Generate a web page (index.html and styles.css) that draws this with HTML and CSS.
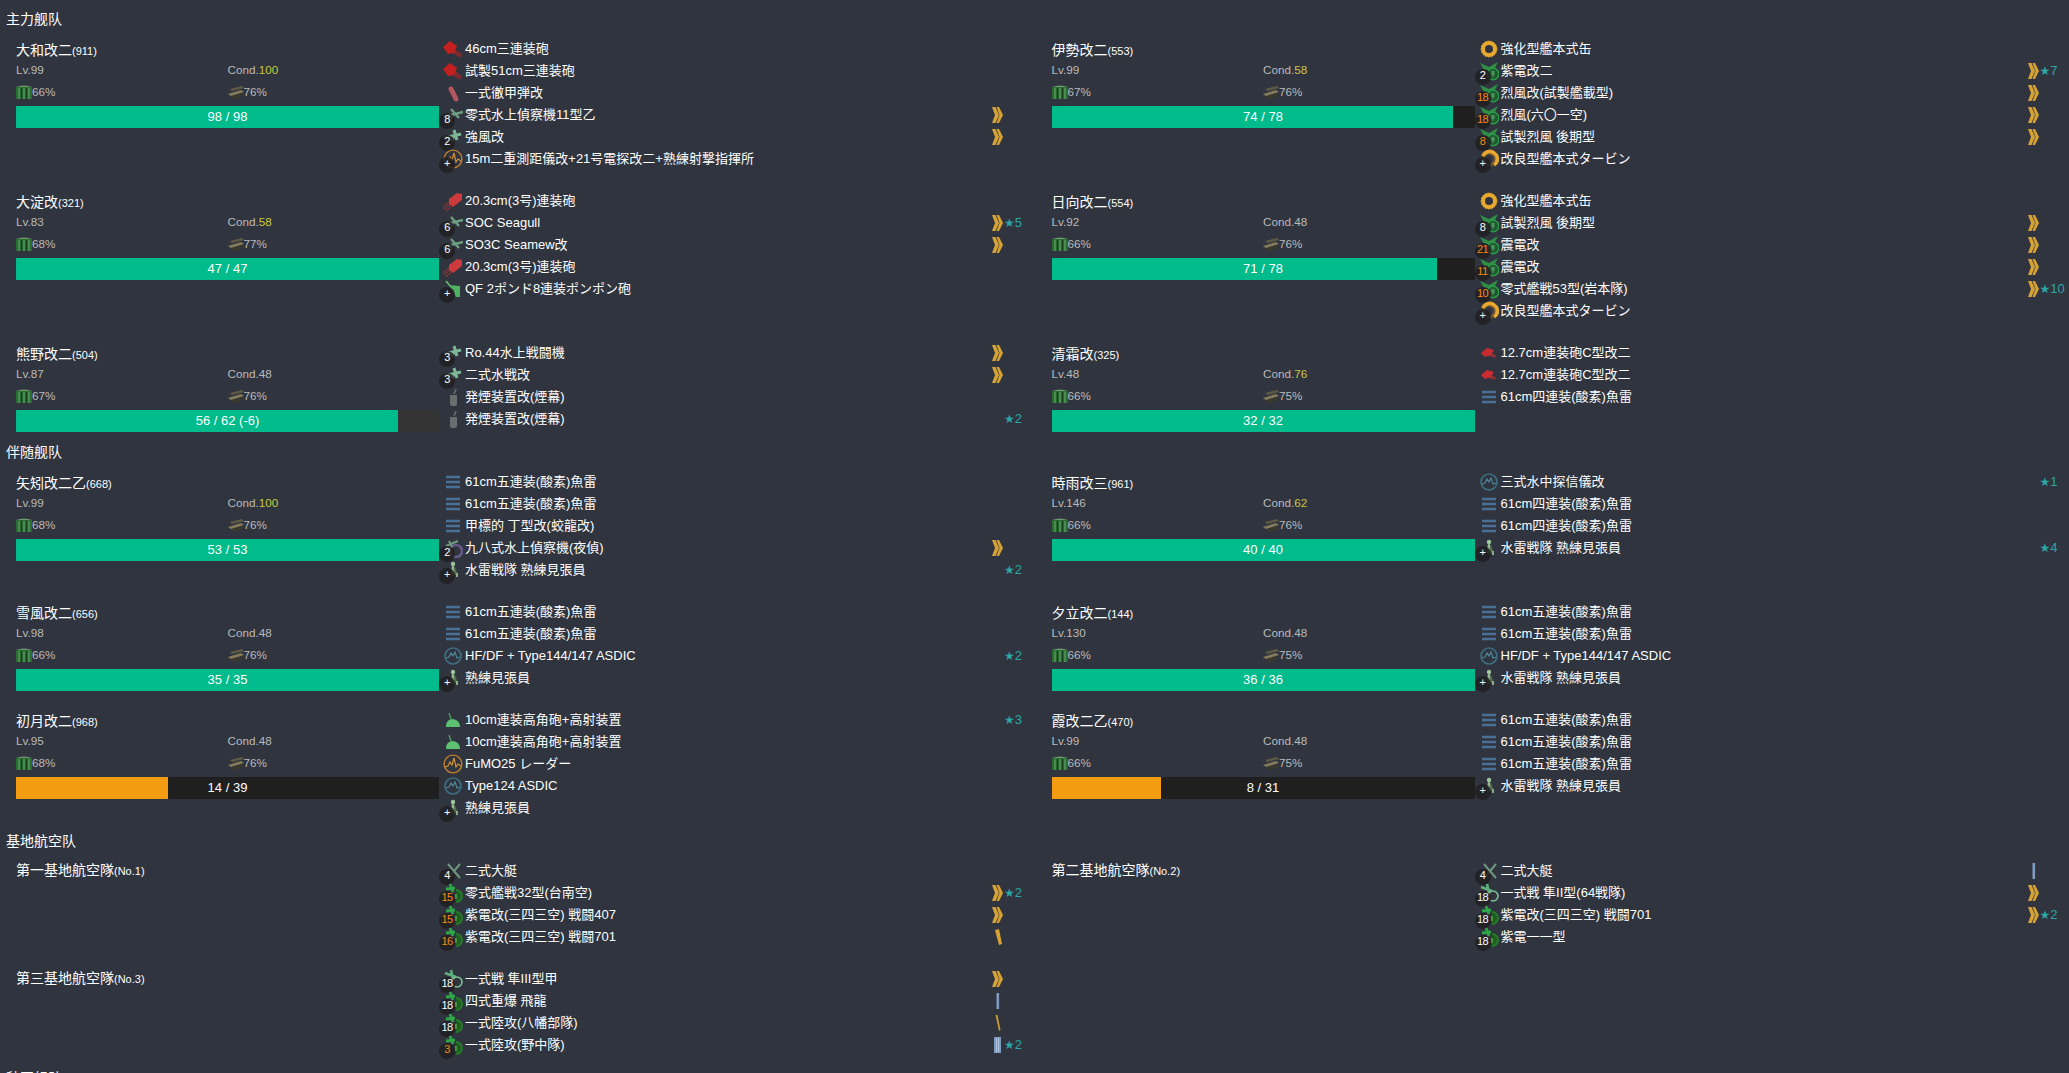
FILE: index.html
```html
<!DOCTYPE html>
<html lang="zh">
<head>
    <meta charset="UTF-8">
    <title>Fleet</title>
    <link rel="stylesheet" href="styles.css">
</head>
<body>
    <!-- shared icons -->
    <svg class="defs" width="0" height="0">
        <symbol id="i-biggun" viewBox="0 0 20 20"><path d="M8 7l11 8-2 4-11-7z" fill="#7b2a30"/><path d="M0 8l7-6 7 5-3 7-6 1z" fill="#c42020"/></symbol>
        <symbol id="i-midgun" viewBox="0 0 20 20"><path d="M7 13l-6 5M8 15l-5 5M6 11l-6 5" stroke="#a33" stroke-width="1"/><path d="M6 8l8-6 5 1 0 6-9 7-4-3z" fill="#cc3a3e"/></symbol>
        <symbol id="i-smallgun" viewBox="0 0 20 20"><path d="M9 9l8 3-1 3-9-3z" fill="#8a3036"/><path d="M2 10l6-5 7 2-3 5-6 2z" fill="#c92c30"/></symbol>
        <symbol id="i-ap" viewBox="0 0 20 20"><path d="M8 6l5 10" stroke="#b4555f" stroke-width="5" stroke-linecap="round"/></symbol>
        <symbol id="i-seaplane" viewBox="0 0 20 20"><path d="M0 12L20 7M8 4l8 9M7 16l3-7" stroke="#6f9f83" stroke-width="2.4" fill="none"/></symbol>
        <symbol id="i-seafighter" viewBox="0 0 20 20"><path d="M1 11l17-4M11 3l3 10M9 14l2-6" stroke="#7db596" stroke-width="3" fill="none"/></symbol>
        <symbol id="i-night" viewBox="0 0 20 20"><circle cx="13" cy="13" r="6" fill="none" stroke="#65588a" stroke-width="2.5"/><path d="M3 8l12-5M6 3l3 6M7 9v8" stroke="#6f9a80" stroke-width="2" fill="none"/></symbol>
        <symbol id="i-boat" viewBox="0 0 20 20"><path d="M5 3l12 14M17 3L6 16" stroke="#6f9680" stroke-width="2" fill="none"/></symbol>
        <symbol id="i-radar" viewBox="0 0 20 20"><circle cx="10" cy="10" r="8.9" fill="none" stroke="#c07f2c" stroke-width="1.4"/><path d="M2 13l3-1 2-4 2 3 2-7 2 9 2-3 3 2" fill="none" stroke="#d58f30" stroke-width="1.2"/></symbol>
        <symbol id="i-sonar" viewBox="0 0 20 20"><circle cx="10" cy="10" r="8" fill="none" stroke="#3c6e80" stroke-width="1.7"/><path d="M3 12l3-1 2-4 2 3 2-4 2 6 3-1" fill="none" stroke="#4d8799" stroke-width="1.2"/></symbol>
        <symbol id="i-torpedo" viewBox="0 0 20 20"><path d="M3 5h14M3 10h14M3 15h14" stroke="#4a7096" stroke-width="2.6"/></symbol>
        <symbol id="i-aa" viewBox="0 0 20 20"><path d="M8 9L6 3" stroke="#4f9a60" stroke-width="1.4"/><path d="M3 17q0-8 7-8q7 1 7 8z" fill="#5cc070"/></symbol>
        <symbol id="i-pompom" viewBox="0 0 20 20"><path d="M3 2l5 6" stroke="#6fc47d" stroke-width="1.4"/><path d="M6 6l11 1v11h-4z" fill="#4fb162"/></symbol>
        <symbol id="i-lookout" viewBox="0 0 20 20"><circle cx="10" cy="4" r="2.2" fill="#9dc79a"/><path d="M8 7h4l2 6-3 3H8z" fill="#55714f"/><path d="M10 6v6M14 13v4" stroke="#a4c7a0" stroke-width="1.6"/></symbol>
        <symbol id="i-smoke" viewBox="0 0 20 20"><path d="M11 7l2-5" stroke="#626a6c" stroke-width="1.8"/><path d="M7 8h7v9q0 2-2 2H9q-2 0-2-2z" fill="#666e70"/></symbol>
        <symbol id="i-boiler" viewBox="0 0 20 20"><circle cx="10" cy="10" r="6" fill="none" stroke="#e9a82e" stroke-width="4"/><circle cx="10" cy="10" r="8" fill="none" stroke="#e9a82e" stroke-width="1" stroke-dasharray="1.500 1.500"/></symbol>
        <symbol id="i-turbine" viewBox="0 0 20 20"><circle cx="10" cy="10" r="6" fill="none" stroke="#6b5532" stroke-width="3.6"/><path d="M4 7a7 7 0 0 1 11-3a7 7 0 0 1 0 12" fill="none" stroke="#e9a82e" stroke-width="3.6"/></symbol>
        <symbol id="i-fighter" viewBox="0 0 20 20"><path d="M1 2l9 4 9-5-4 8H5z" fill="#2f8f46"/><circle cx="14" cy="13" r="5.8" fill="#1d5a2e" stroke="#2c9a48" stroke-width="1.4"/><path d="M12 11h4M12 13h4M14 10v6" stroke="#6bb07c" stroke-width=".8"/></symbol>
        <symbol id="i-land" viewBox="0 0 20 20"><path d="M3 6l9-1M7 1l3 8" stroke="#2fa648" stroke-width="2.8"/><path d="M13 7a6 6 0 0 1 0 12" fill="#1f5c20" stroke="#277a2c" stroke-width="2"/><path d="M12 11h2v5h-2z" fill="#46953f"/></symbol>
        <symbol id="i-hayabusa" viewBox="0 0 20 20"><path d="M2 4l11 4M8 1l2 9" stroke="#5fae7c" stroke-width="2.6"/><circle cx="14" cy="13" r="5" fill="none" stroke="#7cc294" stroke-width="1.6"/></symbol>
        <symbol id="p-chev" viewBox="0 0 11 16"><path d="M0 0h3.500l3.500 8-3.500 8H0l3-8zM4.500 0H7l4 8-4 8H4.500l3-8z" fill="#d6a233"/></symbol>
        <symbol id="p-slash" viewBox="0 0 11 16"><path d="M3 1l4-1 3 15-3 1z" fill="#d6a233"/></symbol>
        <symbol id="p-thin" viewBox="0 0 11 16"><path d="M3.500 0l2 0 3 15-1.500 1z" fill="#c99b35"/></symbol>
        <symbol id="p-bar" viewBox="0 0 11 16"><rect x="4.500" y="0" width="2.600" height="16" fill="#7f9cc0"/></symbol>
        <symbol id="p-bars" viewBox="0 0 11 16"><rect x="2" y="0" width="7" height="16" fill="#7f9cc0"/><path d="M4.500 1v14M6.500 1v14" stroke="#b8c9df" stroke-width=".8"/></symbol>
        <symbol id="r-fuel" viewBox="0 0 16 14"><rect x="0" y="2" width="16" height="12" fill="#2a6b32"/><path d="M0 2q8-3 16 0" fill="#6f9a70"/><path d="M3 3v11M8 3v11M13 3v11" stroke="#62a06a" stroke-width="1.200"/><path d="M5.500 3v11M10.500 3v11" stroke="#183f1d" stroke-width="1.200"/></symbol>
        <symbol id="r-ammo" viewBox="0 0 16 14"><path d="M2 4l12-3 2 2-12 3z" fill="#5f5a44"/><path d="M0 9l13-4 3 2-13 4z" fill="#857a58"/><path d="M3 12l11-3 2 1-10 4z" fill="#3f3928"/></symbol>
    </svg>

    <section class="fleet">
        <h2 class="fleet-title">主力舰队</h2>
        <div class="fleet-row">
            <div class="ship">
                <div class="ship-info">
                    <div class="ship-name">大和改二<small>(911)</small></div>
                    <div class="stats">
                        <span>Lv.99</span><span>Cond.<b class="cond-up">100</b></span>
                        <span><svg class="res"><use href="#r-fuel"/></svg>66%</span><span><svg class="res"><use href="#r-ammo"/></svg>76%</span>
                    </div>
                    <div class="bar"><div class="bar-fill" style="width:100%"></div><div class="bar-label">98 / 98</div></div>
                </div>
                <div class="slots">
                    <div class="slot"><span class="slot-icon"><svg><use href="#i-biggun"/></svg></span><span>46cm三連装砲</span></div>
                    <div class="slot"><span class="slot-icon"><svg><use href="#i-biggun"/></svg></span><span>試製51cm三連装砲</span></div>
                    <div class="slot"><span class="slot-icon"><svg><use href="#i-ap"/></svg></span><span>一式徹甲弾改</span></div>
                    <div class="slot"><span class="slot-icon"><svg><use href="#i-seaplane"/></svg><b class="lv">8</b></span><span>零式水上偵察機11型乙</span><svg class="prof"><use href="#p-chev"/></svg></div>
                    <div class="slot"><span class="slot-icon"><svg><use href="#i-seafighter"/></svg><b class="lv">2</b></span><span>強風改</span><svg class="prof"><use href="#p-chev"/></svg></div>
                    <div class="slot"><span class="slot-icon"><svg><use href="#i-radar"/></svg><b class="lv">+</b></span><span>15m二重測距儀改+21号電探改二+熟練射撃指揮所</span></div>
                </div>
            </div>
            <div class="ship">
                <div class="ship-info">
                    <div class="ship-name">伊勢改二<small>(553)</small></div>
                    <div class="stats">
                        <span>Lv.99</span><span>Cond.<b class="cond-up">58</b></span>
                        <span><svg class="res"><use href="#r-fuel"/></svg>67%</span><span><svg class="res"><use href="#r-ammo"/></svg>76%</span>
                    </div>
                    <div class="bar"><div class="bar-fill" style="width:94.87%"></div><div class="bar-label">74 / 78</div></div>
                </div>
                <div class="slots">
                    <div class="slot"><span class="slot-icon"><svg><use href="#i-boiler"/></svg></span><span>強化型艦本式缶</span></div>
                    <div class="slot"><span class="slot-icon"><svg><use href="#i-fighter"/></svg><b class="lv">2</b></span><span>紫電改二</span><svg class="prof"><use href="#p-chev"/></svg><span class="star"><i>★</i>7</span></div>
                    <div class="slot"><span class="slot-icon"><svg><use href="#i-fighter"/></svg><b class="lv hot">18</b></span><span>烈風改(試製艦載型)</span><svg class="prof"><use href="#p-chev"/></svg></div>
                    <div class="slot"><span class="slot-icon"><svg><use href="#i-fighter"/></svg><b class="lv hot">18</b></span><span>烈風(六〇一空)</span><svg class="prof"><use href="#p-chev"/></svg></div>
                    <div class="slot"><span class="slot-icon"><svg><use href="#i-fighter"/></svg><b class="lv hot">8</b></span><span>試製烈風 後期型</span><svg class="prof"><use href="#p-chev"/></svg></div>
                    <div class="slot"><span class="slot-icon"><svg><use href="#i-turbine"/></svg><b class="lv">+</b></span><span>改良型艦本式タービン</span></div>
                </div>
            </div>
        </div>
        <div class="fleet-row">
            <div class="ship">
                <div class="ship-info">
                    <div class="ship-name">大淀改<small>(321)</small></div>
                    <div class="stats">
                        <span>Lv.83</span><span>Cond.<b class="cond-up">58</b></span>
                        <span><svg class="res"><use href="#r-fuel"/></svg>68%</span><span><svg class="res"><use href="#r-ammo"/></svg>77%</span>
                    </div>
                    <div class="bar"><div class="bar-fill" style="width:100%"></div><div class="bar-label">47 / 47</div></div>
                </div>
                <div class="slots">
                    <div class="slot"><span class="slot-icon"><svg><use href="#i-midgun"/></svg></span><span>20.3cm(3号)連装砲</span></div>
                    <div class="slot"><span class="slot-icon"><svg><use href="#i-seaplane"/></svg><b class="lv">6</b></span><span>SOC Seagull</span><svg class="prof"><use href="#p-chev"/></svg><span class="star"><i>★</i>5</span></div>
                    <div class="slot"><span class="slot-icon"><svg><use href="#i-seaplane"/></svg><b class="lv">6</b></span><span>SO3C Seamew改</span><svg class="prof"><use href="#p-chev"/></svg></div>
                    <div class="slot"><span class="slot-icon"><svg><use href="#i-midgun"/></svg></span><span>20.3cm(3号)連装砲</span></div>
                    <div class="slot"><span class="slot-icon"><svg><use href="#i-pompom"/></svg><b class="lv">+</b></span><span>QF 2ポンド8連装ポンポン砲</span></div>
                </div>
            </div>
            <div class="ship">
                <div class="ship-info">
                    <div class="ship-name">日向改二<small>(554)</small></div>
                    <div class="stats">
                        <span>Lv.92</span><span>Cond.48</span>
                        <span><svg class="res"><use href="#r-fuel"/></svg>66%</span><span><svg class="res"><use href="#r-ammo"/></svg>76%</span>
                    </div>
                    <div class="bar"><div class="bar-fill" style="width:91.03%"></div><div class="bar-label">71 / 78</div></div>
                </div>
                <div class="slots">
                    <div class="slot"><span class="slot-icon"><svg><use href="#i-boiler"/></svg></span><span>強化型艦本式缶</span></div>
                    <div class="slot"><span class="slot-icon"><svg><use href="#i-fighter"/></svg><b class="lv">8</b></span><span>試製烈風 後期型</span><svg class="prof"><use href="#p-chev"/></svg></div>
                    <div class="slot"><span class="slot-icon"><svg><use href="#i-fighter"/></svg><b class="lv hot">21</b></span><span>震電改</span><svg class="prof"><use href="#p-chev"/></svg></div>
                    <div class="slot"><span class="slot-icon"><svg><use href="#i-fighter"/></svg><b class="lv hot">11</b></span><span>震電改</span><svg class="prof"><use href="#p-chev"/></svg></div>
                    <div class="slot"><span class="slot-icon"><svg><use href="#i-fighter"/></svg><b class="lv hot">10</b></span><span>零式艦戦53型(岩本隊)</span><svg class="prof"><use href="#p-chev"/></svg><span class="star"><i>★</i>10</span></div>
                    <div class="slot"><span class="slot-icon"><svg><use href="#i-turbine"/></svg><b class="lv">+</b></span><span>改良型艦本式タービン</span></div>
                </div>
            </div>
        </div>
        <div class="fleet-row">
            <div class="ship">
                <div class="ship-info">
                    <div class="ship-name">熊野改二<small>(504)</small></div>
                    <div class="stats">
                        <span>Lv.87</span><span>Cond.48</span>
                        <span><svg class="res"><use href="#r-fuel"/></svg>67%</span><span><svg class="res"><use href="#r-ammo"/></svg>76%</span>
                    </div>
                    <div class="bar bar-over"><div class="bar-fill" style="width:90.32%"></div><div class="bar-label">56 / 62 (-6)</div></div>
                </div>
                <div class="slots">
                    <div class="slot"><span class="slot-icon"><svg><use href="#i-seafighter"/></svg><b class="lv">3</b></span><span>Ro.44水上戦闘機</span><svg class="prof"><use href="#p-chev"/></svg></div>
                    <div class="slot"><span class="slot-icon"><svg><use href="#i-seafighter"/></svg><b class="lv">3</b></span><span>二式水戦改</span><svg class="prof"><use href="#p-chev"/></svg></div>
                    <div class="slot"><span class="slot-icon"><svg><use href="#i-smoke"/></svg></span><span>発煙装置改(煙幕)</span></div>
                    <div class="slot"><span class="slot-icon"><svg><use href="#i-smoke"/></svg></span><span>発煙装置改(煙幕)</span><span class="star"><i>★</i>2</span></div>
                </div>
            </div>
            <div class="ship">
                <div class="ship-info">
                    <div class="ship-name">清霜改<small>(325)</small></div>
                    <div class="stats">
                        <span>Lv.48</span><span>Cond.<b class="cond-up">76</b></span>
                        <span><svg class="res"><use href="#r-fuel"/></svg>66%</span><span><svg class="res"><use href="#r-ammo"/></svg>75%</span>
                    </div>
                    <div class="bar"><div class="bar-fill" style="width:100%"></div><div class="bar-label">32 / 32</div></div>
                </div>
                <div class="slots">
                    <div class="slot"><span class="slot-icon"><svg><use href="#i-smallgun"/></svg></span><span>12.7cm連装砲C型改二</span></div>
                    <div class="slot"><span class="slot-icon"><svg><use href="#i-smallgun"/></svg></span><span>12.7cm連装砲C型改二</span></div>
                    <div class="slot"><span class="slot-icon"><svg><use href="#i-torpedo"/></svg></span><span>61cm四連装(酸素)魚雷</span></div>
                </div>
            </div>
        </div>
    </section>

    <section class="fleet">
        <h2 class="fleet-title">伴随舰队</h2>
        <div class="fleet-row">
            <div class="ship">
                <div class="ship-info">
                    <div class="ship-name">矢矧改二乙<small>(668)</small></div>
                    <div class="stats">
                        <span>Lv.99</span><span>Cond.<b class="cond-up">100</b></span>
                        <span><svg class="res"><use href="#r-fuel"/></svg>68%</span><span><svg class="res"><use href="#r-ammo"/></svg>76%</span>
                    </div>
                    <div class="bar"><div class="bar-fill" style="width:100%"></div><div class="bar-label">53 / 53</div></div>
                </div>
                <div class="slots">
                    <div class="slot"><span class="slot-icon"><svg><use href="#i-torpedo"/></svg></span><span>61cm五連装(酸素)魚雷</span></div>
                    <div class="slot"><span class="slot-icon"><svg><use href="#i-torpedo"/></svg></span><span>61cm五連装(酸素)魚雷</span></div>
                    <div class="slot"><span class="slot-icon"><svg><use href="#i-torpedo"/></svg></span><span>甲標的 丁型改(蛟龍改)</span></div>
                    <div class="slot"><span class="slot-icon"><svg><use href="#i-night"/></svg><b class="lv">2</b></span><span>九八式水上偵察機(夜偵)</span><svg class="prof"><use href="#p-chev"/></svg></div>
                    <div class="slot"><span class="slot-icon"><svg><use href="#i-lookout"/></svg><b class="lv">+</b></span><span>水雷戦隊 熟練見張員</span><span class="star"><i>★</i>2</span></div>
                </div>
            </div>
            <div class="ship">
                <div class="ship-info">
                    <div class="ship-name">時雨改三<small>(961)</small></div>
                    <div class="stats">
                        <span>Lv.146</span><span>Cond.<b class="cond-up">62</b></span>
                        <span><svg class="res"><use href="#r-fuel"/></svg>66%</span><span><svg class="res"><use href="#r-ammo"/></svg>76%</span>
                    </div>
                    <div class="bar"><div class="bar-fill" style="width:100%"></div><div class="bar-label">40 / 40</div></div>
                </div>
                <div class="slots">
                    <div class="slot"><span class="slot-icon"><svg><use href="#i-sonar"/></svg></span><span>三式水中探信儀改</span><span class="star"><i>★</i>1</span></div>
                    <div class="slot"><span class="slot-icon"><svg><use href="#i-torpedo"/></svg></span><span>61cm四連装(酸素)魚雷</span></div>
                    <div class="slot"><span class="slot-icon"><svg><use href="#i-torpedo"/></svg></span><span>61cm四連装(酸素)魚雷</span></div>
                    <div class="slot"><span class="slot-icon"><svg><use href="#i-lookout"/></svg><b class="lv">+</b></span><span>水雷戦隊 熟練見張員</span><span class="star"><i>★</i>4</span></div>
                </div>
            </div>
        </div>
        <div class="fleet-row">
            <div class="ship">
                <div class="ship-info">
                    <div class="ship-name">雪風改二<small>(656)</small></div>
                    <div class="stats">
                        <span>Lv.98</span><span>Cond.48</span>
                        <span><svg class="res"><use href="#r-fuel"/></svg>66%</span><span><svg class="res"><use href="#r-ammo"/></svg>76%</span>
                    </div>
                    <div class="bar"><div class="bar-fill" style="width:100%"></div><div class="bar-label">35 / 35</div></div>
                </div>
                <div class="slots">
                    <div class="slot"><span class="slot-icon"><svg><use href="#i-torpedo"/></svg></span><span>61cm五連装(酸素)魚雷</span></div>
                    <div class="slot"><span class="slot-icon"><svg><use href="#i-torpedo"/></svg></span><span>61cm五連装(酸素)魚雷</span></div>
                    <div class="slot"><span class="slot-icon"><svg><use href="#i-sonar"/></svg></span><span>HF/DF + Type144/147 ASDIC</span><span class="star"><i>★</i>2</span></div>
                    <div class="slot"><span class="slot-icon"><svg><use href="#i-lookout"/></svg><b class="lv">+</b></span><span>熟練見張員</span></div>
                </div>
            </div>
            <div class="ship">
                <div class="ship-info">
                    <div class="ship-name">夕立改二<small>(144)</small></div>
                    <div class="stats">
                        <span>Lv.130</span><span>Cond.48</span>
                        <span><svg class="res"><use href="#r-fuel"/></svg>66%</span><span><svg class="res"><use href="#r-ammo"/></svg>75%</span>
                    </div>
                    <div class="bar"><div class="bar-fill" style="width:100%"></div><div class="bar-label">36 / 36</div></div>
                </div>
                <div class="slots">
                    <div class="slot"><span class="slot-icon"><svg><use href="#i-torpedo"/></svg></span><span>61cm五連装(酸素)魚雷</span></div>
                    <div class="slot"><span class="slot-icon"><svg><use href="#i-torpedo"/></svg></span><span>61cm五連装(酸素)魚雷</span></div>
                    <div class="slot"><span class="slot-icon"><svg><use href="#i-sonar"/></svg></span><span>HF/DF + Type144/147 ASDIC</span></div>
                    <div class="slot"><span class="slot-icon"><svg><use href="#i-lookout"/></svg><b class="lv">+</b></span><span>水雷戦隊 熟練見張員</span></div>
                </div>
            </div>
        </div>
        <div class="fleet-row">
            <div class="ship">
                <div class="ship-info">
                    <div class="ship-name">初月改二<small>(968)</small></div>
                    <div class="stats">
                        <span>Lv.95</span><span>Cond.48</span>
                        <span><svg class="res"><use href="#r-fuel"/></svg>68%</span><span><svg class="res"><use href="#r-ammo"/></svg>76%</span>
                    </div>
                    <div class="bar"><div class="bar-fill bar-warn" style="width:35.9%"></div><div class="bar-label">14 / 39</div></div>
                </div>
                <div class="slots">
                    <div class="slot"><span class="slot-icon"><svg><use href="#i-aa"/></svg></span><span>10cm連装高角砲+高射装置</span><span class="star"><i>★</i>3</span></div>
                    <div class="slot"><span class="slot-icon"><svg><use href="#i-aa"/></svg></span><span>10cm連装高角砲+高射装置</span></div>
                    <div class="slot"><span class="slot-icon"><svg><use href="#i-radar"/></svg></span><span>FuMO25 レーダー</span></div>
                    <div class="slot"><span class="slot-icon"><svg><use href="#i-sonar"/></svg></span><span>Type124 ASDIC</span></div>
                    <div class="slot"><span class="slot-icon"><svg><use href="#i-lookout"/></svg><b class="lv">+</b></span><span>熟練見張員</span></div>
                </div>
            </div>
            <div class="ship">
                <div class="ship-info">
                    <div class="ship-name">霞改二乙<small>(470)</small></div>
                    <div class="stats">
                        <span>Lv.99</span><span>Cond.48</span>
                        <span><svg class="res"><use href="#r-fuel"/></svg>66%</span><span><svg class="res"><use href="#r-ammo"/></svg>75%</span>
                    </div>
                    <div class="bar"><div class="bar-fill bar-warn" style="width:25.81%"></div><div class="bar-label">8 / 31</div></div>
                </div>
                <div class="slots">
                    <div class="slot"><span class="slot-icon"><svg><use href="#i-torpedo"/></svg></span><span>61cm五連装(酸素)魚雷</span></div>
                    <div class="slot"><span class="slot-icon"><svg><use href="#i-torpedo"/></svg></span><span>61cm五連装(酸素)魚雷</span></div>
                    <div class="slot"><span class="slot-icon"><svg><use href="#i-torpedo"/></svg></span><span>61cm五連装(酸素)魚雷</span></div>
                    <div class="slot"><span class="slot-icon"><svg><use href="#i-lookout"/></svg><b class="lv">+</b></span><span>水雷戦隊 熟練見張員</span></div>
                </div>
            </div>
        </div>
    </section>

    <section class="fleet">
        <h2 class="fleet-title">基地航空队</h2>
        <div class="fleet-row">
            <div class="ship">
                <div class="ship-info">
                    <div class="ship-name base-name">第一基地航空隊<small>(No.1)</small></div>
                </div>
                <div class="slots">
                    <div class="slot"><span class="slot-icon"><svg><use href="#i-boat"/></svg><b class="lv">4</b></span><span>二式大艇</span></div>
                    <div class="slot"><span class="slot-icon"><svg><use href="#i-land"/></svg><b class="lv hot">15</b></span><span>零式艦戦32型(台南空)</span><svg class="prof"><use href="#p-chev"/></svg><span class="star"><i>★</i>2</span></div>
                    <div class="slot"><span class="slot-icon"><svg><use href="#i-land"/></svg><b class="lv hot">15</b></span><span>紫電改(三四三空) 戦闘407</span><svg class="prof"><use href="#p-chev"/></svg></div>
                    <div class="slot"><span class="slot-icon"><svg><use href="#i-land"/></svg><b class="lv hot">16</b></span><span>紫電改(三四三空) 戦闘701</span><svg class="prof"><use href="#p-slash"/></svg></div>
                </div>
            </div>
            <div class="ship">
                <div class="ship-info">
                    <div class="ship-name base-name">第二基地航空隊<small>(No.2)</small></div>
                </div>
                <div class="slots">
                    <div class="slot"><span class="slot-icon"><svg><use href="#i-boat"/></svg><b class="lv">4</b></span><span>二式大艇</span><svg class="prof"><use href="#p-bar"/></svg></div>
                    <div class="slot"><span class="slot-icon"><svg><use href="#i-hayabusa"/></svg><b class="lv">18</b></span><span>一式戦 隼II型(64戦隊)</span><svg class="prof"><use href="#p-chev"/></svg></div>
                    <div class="slot"><span class="slot-icon"><svg><use href="#i-land"/></svg><b class="lv">18</b></span><span>紫電改(三四三空) 戦闘701</span><svg class="prof"><use href="#p-chev"/></svg><span class="star"><i>★</i>2</span></div>
                    <div class="slot"><span class="slot-icon"><svg><use href="#i-land"/></svg><b class="lv">18</b></span><span>紫電一一型</span></div>
                </div>
            </div>
        </div>
        <div class="fleet-row">
            <div class="ship">
                <div class="ship-info">
                    <div class="ship-name base-name">第三基地航空隊<small>(No.3)</small></div>
                </div>
                <div class="slots">
                    <div class="slot"><span class="slot-icon"><svg><use href="#i-hayabusa"/></svg><b class="lv">18</b></span><span>一式戦 隼III型甲</span><svg class="prof"><use href="#p-chev"/></svg></div>
                    <div class="slot"><span class="slot-icon"><svg><use href="#i-land"/></svg><b class="lv">18</b></span><span>四式重爆 飛龍</span><svg class="prof"><use href="#p-bar"/></svg></div>
                    <div class="slot"><span class="slot-icon"><svg><use href="#i-land"/></svg><b class="lv">18</b></span><span>一式陸攻(八幡部隊)</span><svg class="prof"><use href="#p-thin"/></svg></div>
                    <div class="slot"><span class="slot-icon"><svg><use href="#i-land"/></svg><b class="lv hot">3</b></span><span>一式陸攻(野中隊)</span><svg class="prof"><use href="#p-bars"/></svg><span class="star"><i>★</i>2</span></div>
                </div>
            </div>
        </div>
    </section>

    <section class="fleet">
        <h2 class="fleet-title">秋国舰队</h2>
    </section>
</body>
</html>
```

FILE: styles.css
```css
html, body {
    margin: 0;
    padding: 0;
    height: 100%;
    overflow: hidden;
}
body {
    background-color: #2f343e;
    color: #fff;
    font-family: "Liberation Sans", "Noto Sans CJK JP", sans-serif;
    font-size: 13px;
}
.defs {
    position: absolute;
}
.fleet + .fleet {
    margin-top: 3px;
}
.fleet-title {
    height: 38px;
    margin: 0;
    padding-left: 6px;
    box-sizing: border-box;
    font-size: 14px;
    font-weight: normal;
    line-height: 39px;
}
.fleet-row {
    display: grid;
    grid-template-columns: 1035.5px 1fr;
    margin-bottom: 20px;
}
.fleet-row:last-child {
    margin-bottom: 0;
}
.ship {
    display: flex;
    padding-left: 16px;
}
.ship-info {
    width: 423px;
    height: 88px;
    flex: none;
}
.ship-name {
    height: 24px;
    font-size: 14px;
    line-height: 24px;
}
.base-name {
    line-height: 21px;
}
.ship-name small {
    font-size: 11px;
}
.stats {
    display: grid;
    grid-template-columns: 1fr 1fr;
    grid-auto-rows: 16px;
    row-gap: 6px;
    color: #bbb;
    font-size: 11.7px;
    line-height: 16px;
}
.stats span {
    display: flex;
    align-items: center;
}
.cond-up {
    color: #c9c93e;
    font-weight: normal;
}
.res {
    width: 16px;
    height: 14px;
}
.bar {
    position: relative;
    height: 22px;
    margin-top: 6px;
    background-color: #1f1f1f;
}
.bar-over {
    background-color: #333;
}
.bar-fill {
    height: 100%;
    background-color: #00bb8c;
}
.bar-warn {
    background-color: #f39c12;
}
.bar-label {
    position: absolute;
    inset: 0;
    text-align: center;
    line-height: 22px;
}
.slots {
    flex: 1;
}
.slot {
    display: grid;
    grid-template-columns: 26px 527px 12px 1fr;
    align-items: center;
    height: 22px;
    line-height: 22px;
}
.slot-icon {
    position: relative;
    height: 22px;
}
.slot-icon svg {
    position: absolute;
    left: 4px;
    top: 1px;
    width: 20px;
    height: 20px;
}
.lv {
    position: absolute;
    left: 0;
    top: 9px;
    width: 16px;
    height: 16px;
    border-radius: 50%;
    background-color: rgba(32, 32, 34, 0.85);
    font-size: 11px;
    font-weight: normal;
    line-height: 12px;
    letter-spacing: -0.5px;
    text-align: center;
}
.hot {
    color: #f78a12;
}
.prof {
    grid-column: 3;
    width: 11px;
    height: 16px;
}
.star {
    grid-column: 4;
    color: #2ba7a7;
    line-height: 20px;
}
.star i {
    font-family: "DejaVu Sans", sans-serif;
    font-size: 12px;
    font-style: normal;
}
```
